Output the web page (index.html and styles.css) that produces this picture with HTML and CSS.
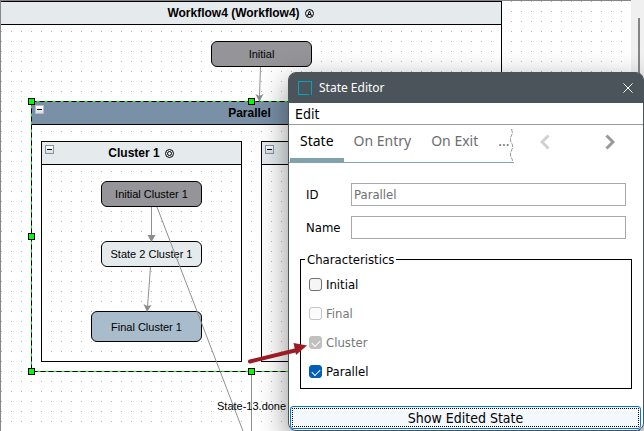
FILE: index.html
```html
<!DOCTYPE html>
<html lang="en">
<head>
<meta charset="utf-8">
<title>Workflow4</title>
<link rel="stylesheet" href="styles.css">
</head>
<body>
<div class="workspace">
  <main class="canvas">
    <section class="frame workflow">
      <h1 class="frame-title">Workflow4 (Workflow4)
        <svg class="mark" viewBox="0 0 11 11" aria-hidden="true"><circle cx="5.5" cy="5.5" r="4"/><path d="M3.5 8 5.500 3 7.500 8M4 6.500h3"/></svg>
      </h1>
    </section>
    <section class="frame parallel">
      <button class="fold" aria-label="Collapse Parallel"></button>
      <h2 class="frame-title">Parallel</h2>
    </section>
    <section class="frame cluster cluster-1">
      <button class="fold" aria-label="Collapse Cluster 1"></button>
      <h3 class="frame-title">Cluster 1
        <svg class="mark" viewBox="0 0 11 11" aria-hidden="true"><circle cx="5.5" cy="5.5" r="4"/><circle cx="5.5" cy="5.5" r="2"/></svg>
      </h3>
    </section>
    <section class="frame cluster cluster-2">
      <button class="fold" aria-label="Collapse cluster"></button>
      <h3 class="frame-title"></h3>
    </section>

    <div class="node start n-initial">Initial</div>
    <div class="node start n-initial-cluster">Initial Cluster 1</div>
    <div class="node n-state-2">State 2 Cluster 1</div>
    <div class="node final n-final-cluster">Final Cluster 1</div>

    <svg class="edges" width="644" height="431" viewBox="0 0 644 431" aria-hidden="true">
      <rect class="sel-base" x="31.5" y="101.5" width="440" height="270"/>
      <rect class="sel-dash" x="31.5" y="101.5" width="440" height="270"/>
      <g class="lines">
        <path d="M260.5 67 259.5 97M151.5 207V237M150.5 267 147.5 307M157 207 243 431M251.5 374V431"/>
      </g>
      <g class="heads">
        <path d="M255.5 94 259.5 96 263.5 94 259.3 102ZM147.5 235H155.5L151.5 242ZM143.5 304 147.5 306 151.5 305 147 312Z"/>
      </g>
      <g class="handles">
        <rect x="28.5" y="98.5" width="6" height="6"/>
        <rect x="248.5" y="98.5" width="6" height="6"/>
        <rect x="28.5" y="233.5" width="6" height="6"/>
        <rect x="28.5" y="368.5" width="6" height="6"/>
        <rect x="248.5" y="368.5" width="6" height="6"/>
      </g>
    </svg>
    <span class="edge-label">State-13.done</span>
  </main>
  <div class="scrollbar"><div class="thumb"></div></div>

  <form class="dialog" role="dialog" aria-labelledby="dialog-title">
    <header class="titlebar">
      <svg class="app-icon" viewBox="0 0 14 14" aria-hidden="true"><rect x=".5" y=".5" width="13" height="13"/><path class="notch" d="M11 13.5h2"/></svg>
      <span class="dialog-title" id="dialog-title">State Editor</span>
      <button type="button" class="close" aria-label="Close"><svg viewBox="0 0 10 10"><path d="M.5.5 9.5 9.5M9.5.5.5 9.5"/></svg></button>
    </header>
    <nav class="menubar"><button type="button">Edit</button></nav>
    <div class="tabbar">
      <div class="tabs" role="tablist">
        <button type="button" class="tab active" role="tab" aria-selected="true">State</button>
        <button type="button" class="tab" role="tab">On Entry</button>
        <button type="button" class="tab" role="tab">On Exit</button>
        <button type="button" class="tab more" role="tab">...</button>
        <svg class="tear" viewBox="0 0 4 33" aria-hidden="true"><path d="M1.5 0 2.5 4 .5 9 .5 12 2.5 16 2.5 19 .5 24 .5 27 2.5 31 2 33"/></svg>
      </div>
      <div class="steps">
        <button type="button" class="step" disabled aria-label="Previous tabs"><svg viewBox="0 0 10 16"><path d="M8.5 1.5 2 8 8.5 14.5"/></svg></button>
        <button type="button" class="step" aria-label="Next tabs"><svg viewBox="0 0 10 16"><path d="M1.5 1.5 8 8 1.5 14.5"/></svg></button>
      </div>
    </div>
    <div class="fields">
      <label for="state-id">ID</label>
      <input id="state-id" type="text" value="Parallel" readonly>
      <label for="state-name">Name</label>
      <input id="state-name" type="text">
    </div>
    <fieldset class="traits">
      <legend>Characteristics</legend>
      <label><input type="checkbox">Initial</label>
      <label class="off"><input type="checkbox" disabled>Final</label>
      <label class="off"><input type="checkbox" checked disabled>Cluster</label>
      <label><input type="checkbox" checked>Parallel</label>
    </fieldset>
    <button type="button" class="show">Show Edited State</button>
  </form>

  <svg class="pointer" width="60" height="24" viewBox="0 0 60 24" aria-hidden="true">
    <path class="shaft" d="M3 18.5 48 7.5"/><path class="tip" d="M49 12 46.5 0 60 2.5Z"/>
  </svg>
</div>
</body>
</html>
```
FILE: styles.css
```css
* { box-sizing: border-box; }
body { margin: 0; font-family: "Liberation Sans", Arial, sans-serif; color: #000; }
button { padding: 0; border: 0; background: none; font: inherit; color: inherit; }

.workspace { position: relative; display: flex; min-height: 100vh; overflow: hidden; }
.canvas {
  position: relative;
  flex: 1;
  border-top: 1px solid #85858c;
  border-left: 1px solid #85858c;
  background: conic-gradient(from 270deg at 1px 1px, #b8b8b8 90deg, transparent 0) 0 0 / 10px 10px #fff;
}
.scrollbar { width: 13px; padding: 18px 4px 0 7px; background: #f0f0f0; }
.thumb { height: 100vh; background: #858585; }

/* State containers */
.frame { position: absolute; border: 1px solid #000; }
.frame-title {
  display: flex;
  align-items: center;
  justify-content: center;
  gap: 4px;
  height: 23px;
  margin: 0;
  border-bottom: 1px solid #000;
  background: #e5eaed;
  font-size: 12px;
  font-weight: bold;
}
.workflow { left: 0; top: 0; width: 501px; height: 500px; border-left: 0; }
.workflow .frame-title { padding-right: 20px; }
.parallel { left: 30px; top: 100px; width: 441px; height: 271px; }
.parallel .frame-title { padding-right: 4px; background: #7a90a6; }
.cluster { top: 140px; width: 201px; height: 221px; }
.cluster-1 { left: 40px; }
.cluster-2 { left: 260px; }
.mark { width: 11px; height: 11px; fill: none; stroke: #000; }
.fold {
  position: absolute;
  left: 3px;
  top: 3px;
  width: 9px;
  height: 9px;
  border: 1px solid #b4bec6;
  background: linear-gradient(#000, #000) center / 5px 1px no-repeat, linear-gradient(#fff, #ddd);
}
.cluster .fold { border-color: #7f95ab; }

/* States */
.node {
  position: absolute;
  display: flex;
  align-items: center;
  justify-content: center;
  width: 101px;
  height: 26px;
  border: 1px solid #000;
  border-radius: 6px;
  background: #e5eaed;
  font-size: 11px;
}
.start { background: #949499; }
.final { background: #a9bccc; }
.n-initial { left: 210px; top: 40px; }
.n-initial-cluster { left: 100px; top: 180px; }
.n-state-2 { left: 100px; top: 240px; }
.n-final-cluster { left: 90px; top: 310px; width: 111px; height: 31px; }

/* Transitions and selection */
.edges { position: absolute; left: -1px; top: -1px; fill: none; }
.sel-base { stroke: #00ff00; }
.sel-dash { stroke: #000; stroke-dasharray: 5 3; }
.lines { stroke: #909090; }
.heads { fill: #8c8c8c; }
.handles { fill: #00ff00; stroke: #000; }
.edge-label { position: absolute; left: 216px; top: 399px; font-size: 11px; line-height: 13px; }

/* State editor */
.dialog {
  position: absolute;
  left: 288px;
  right: 0;
  top: 72px;
  border: 1px solid #4b545a;
  border-radius: 8px;
  background: #fff;
  box-shadow: 0 10px 30px rgba(0, 0, 0, 0.45);
  font-family: "DejaVu Sans Condensed", "DejaVu Sans", sans-serif;
  font-size: 13px;
}
.titlebar {
  display: flex;
  align-items: center;
  gap: 7px;
  height: 30px;
  padding: 0 10px 0 9px;
  border-radius: 6px 6px 0 0;
  background: #4b545a;
  color: #fff;
  font-family: "Noto Sans", sans-serif;
  font-size: 12px;
}
.app-icon { width: 14px; height: 14px; fill: none; stroke: #00a5bd; }
.notch { stroke: #4b545a; }
.dialog-title { flex: 1; padding-bottom: 2px; }
.close { display: flex; }
.close svg { width: 10px; height: 10px; fill: none; stroke: #fff; }
.menubar { display: flex; height: 22px; padding-left: 6px; border-bottom: 1px solid #999; font-size: 14px; }
.tabbar { display: flex; align-items: center; height: 38px; color: #6e6e6e; }
.tabs { position: relative; display: flex; flex: none; align-self: stretch; border-bottom: 1px solid #83a4ae; }
.tab {
  height: 37px;
  padding: 0 10px 6px;
  font-family: "Noto Sans", sans-serif;
  font-size: 14px;
  white-space: nowrap;
}
.active { margin-left: 1px; border-bottom: 4px solid #7fa3ad; padding-bottom: 2px; color: #000; }
.more { padding-right: 4px; }
.tear { position: absolute; right: 0; top: 4px; width: 4px; height: 33px; fill: none; stroke: #999; stroke-dasharray: 4 1; }
.steps { display: flex; flex: 1; justify-content: flex-end; gap: 55px; padding-right: 28px; }
.step { display: flex; padding-bottom: 4px; }
.step svg { width: 10px; height: 16px; fill: none; stroke: #999; stroke-width: 3; }
.step:disabled svg { stroke: #d0d0d0; }
.fields {
  display: grid;
  grid-template-columns: 45px 1fr;
  align-items: center;
  gap: 10px 0;
  margin: 20px 17px 0 17px;
}
.fields input {
  width: 100%;
  height: 23px;
  padding: 0 2px;
  border: 1px solid #a8a8ac;
  background: #fff;
  color: #6e6e6e;
  font: inherit;
}
.traits {
  display: flex;
  flex-direction: column;
  gap: 12px;
  margin: 12px 11px 0 11px;
  padding: 8px 8px 8px;
  border: 1px solid #000;
}
.traits legend { margin-left: -4px; padding: 0 2px; line-height: 17px; }
.traits label { display: flex; align-items: center; gap: 4px; line-height: 17px; }
.traits .off { color: #777; }
.traits input {
  appearance: none;
  display: flex;
  justify-content: center;
  width: 13px;
  height: 13px;
  margin: 0;
  border: 1px solid #707070;
  border-radius: 3px;
  background: #f5f5f5;
}
.traits input:disabled { border-color: #c4c4c4; background: #fbfbfb; }
.traits input:checked { border-color: #005fb8; background: #005fb8; }
.traits input:checked:disabled { border-color: #c0c0c0; background: #c0c0c0; }
.traits input:checked::after {
  content: "";
  width: 7px;
  height: 4px;
  margin-top: 3px;
  border: solid #fff;
  border-width: 0 0 1px 1px;
  transform: rotate(-45deg);
}
.show {
  display: block;
  width: calc(100% - 3px);
  height: 23px;
  margin: 17px 2px 1px 1px;
  border: 1px solid #0078d4;
  border-radius: 3px;
  outline: 1px dotted #000;
  outline-offset: -3px;
  background: #f3f8fd;
  font-size: 14px;
}

/* Callout arrow */
.pointer { position: absolute; left: 247px; top: 343px; }
.shaft { fill: none; stroke: #9c1c26; stroke-width: 4; stroke-linecap: round; }
.tip { fill: #9c1c26; }
```
